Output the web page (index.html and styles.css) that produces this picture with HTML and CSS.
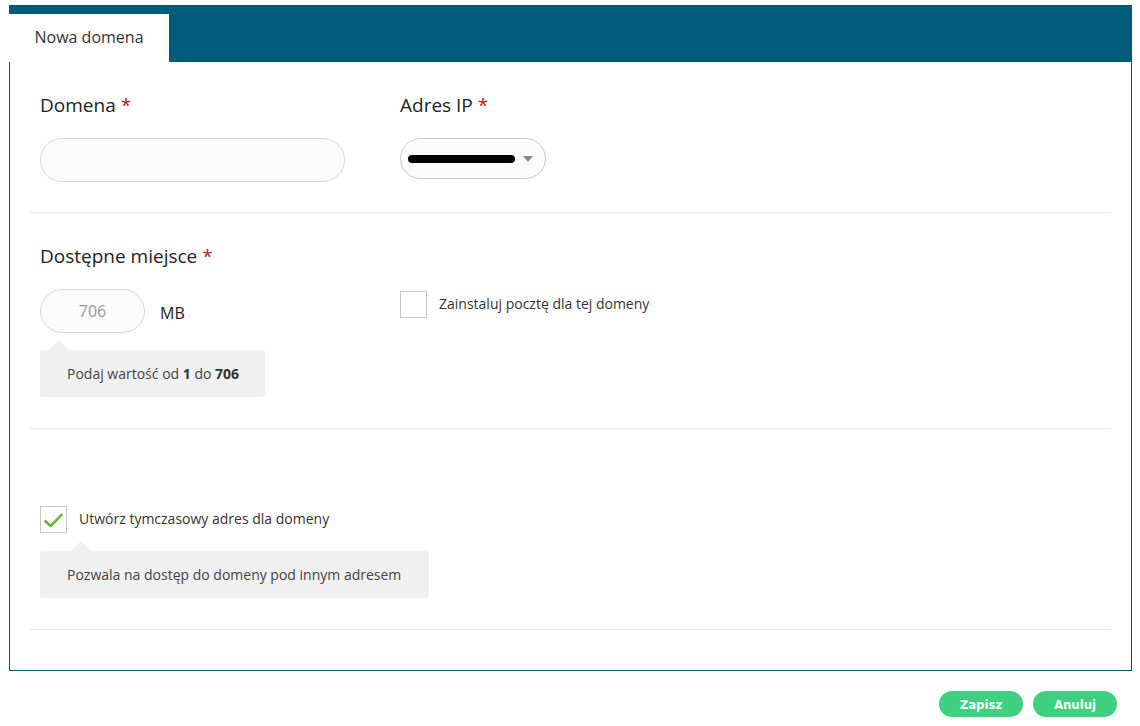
FILE: index.html
```html
<!DOCTYPE html>
<html>
<head>
  <title>Nowa domena</title>
  <meta charset="utf-8">
  <link rel="stylesheet" href="styles.css">
</head>
<body>
  <div class="topbar">
    <div class="tab">Nowa domena</div>
  </div>

  <div class="panel">
    <div class="row row-first">
      <div class="field">
        <label class="label">Domena <span class="req">*</span></label>
        <input type="text" class="text-input wide">
      </div>
      <div class="field">
        <label class="label">Adres IP <span class="req">*</span></label>
        <div class="select">
          <span class="redacted"></span>
          <span class="caret"></span>
        </div>
      </div>
    </div>

    <div class="row row-second">
      <div class="field">
        <label class="label">Dostępne miejsce <span class="req">*</span></label>
        <div class="size-line">
          <input type="text" class="text-input small" value="706">
          <span class="unit">MB</span>
        </div>
        <div class="hint hint-size">Podaj wartość od <strong>1</strong> do <strong>706</strong></div>
      </div>
      <div class="field">
        <div class="check-line mail-check">
          <span class="checkbox"></span>
          <span class="check-text">Zainstaluj pocztę dla tej domeny</span>
        </div>
      </div>
    </div>

    <div class="row row-third">
      <div class="field">
        <div class="check-line">
          <span class="checkbox">
            <svg width="19" height="15" viewBox="0 0 19 15"><path d="M1.5 8.2 L6.6 13 L17.5 1.8" fill="none" stroke="#6db33f" stroke-width="2.6" stroke-linecap="round" stroke-linejoin="round"/></svg>
          </span>
          <span class="check-text">Utwórz tymczasowy adres dla domeny</span>
        </div>
        <div class="hint hint-temp">Pozwala na dostęp do domeny pod innym adresem</div>
      </div>
    </div>
  </div>

  <div class="actions">
    <button class="btn">Zapisz</button>
    <button class="btn">Anuluj</button>
  </div>
</body>
</html>
```

FILE: styles.css
```css
body {
  margin: 0;
  padding: 5px 8px 0 9px;
  font-family: 'Open Sans', 'Noto Sans', sans-serif;
  color: #222;
  background: #fff;
}

.topbar {
  background-color: #005a7a;
  height: 57px;
  padding-top: 9px;
  box-sizing: border-box;
}

.tab {
  width: 160px;
  height: 48px;
  background: #fff;
  color: #333;
  font-size: 16px;
  line-height: 47px;
  text-align: center;
}

.panel {
  border: 1px solid #005a7a;
  border-top: none;
  padding: 0 20px 40px;
}

.row {
  display: grid;
  grid-template-columns: 360px 1fr;
  padding: 0 10px;
  border-bottom: 1px solid #e6e6e6;
}

.row-first {
  padding-top: 31px;
  padding-bottom: 30px;
}

.row-second {
  padding-top: 31px;
  padding-bottom: 31px;
}

.row-third {
  padding-top: 77px;
  padding-bottom: 31px;
}

.label {
  display: block;
  font-size: 19px;
  line-height: 24px;
  margin-bottom: 21px;
  color: #222;
}

.req {
  color: #c4161c;
}

.text-input {
  display: block;
  height: 44px;
  border: 1px solid #ddd9c9;
  border-radius: 22px;
  background: #fafbfa;
  box-sizing: border-box;
  font-family: 'Open Sans', sans-serif;
  font-size: 16px;
  outline: none;
}

.text-input.wide {
  width: 305px;
}

.text-input.small {
  width: 105px;
  text-align: center;
  color: #999;
}

.select {
  display: flex;
  align-items: center;
  width: 146px;
  height: 41px;
  border: 1px solid #c8c8c8;
  border-radius: 21px;
  background: #fcfcfc;
  box-sizing: border-box;
  padding-left: 7px;
}

.redacted {
  width: 107px;
  height: 8px;
  border-radius: 4px;
  background: #000;
}

.caret {
  margin-left: 8px;
  width: 0;
  height: 0;
  border-left: 5px solid transparent;
  border-right: 5px solid transparent;
  border-top: 6px solid #888;
}

.size-line {
  display: flex;
  align-items: center;
  gap: 15px;
}

.unit {
  font-size: 16px;
  color: #222;
  padding-top: 4px;
}

.hint {
  position: relative;
  background: #f0f0f0;
  border-radius: 2px;
  font-size: 14px;
  color: #444;
  height: 47px;
  line-height: 47px;
  padding-left: 27px;
  box-sizing: border-box;
}

.hint::before {
  content: "";
  position: absolute;
  top: -10px;
  width: 0;
  height: 0;
  border-left: 10px solid transparent;
  border-right: 10px solid transparent;
  border-bottom: 10px solid #f0f0f0;
}

.hint strong {
  font-weight: 700;
  color: #333;
}

.hint-size {
  width: 225px;
  margin-top: 17px;
}

.hint-size::before {
  left: 9px;
}

.hint-temp {
  width: 389px;
  margin-top: 18px;
}

.hint-temp::before {
  left: 31px;
}

.mail-check {
  margin-top: 47px;
}

.check-line {
  display: flex;
  align-items: center;
  gap: 12px;
  font-size: 14px;
  color: #333;
}

.check-text {
  margin-top: -3px;
}

.checkbox {
  width: 27px;
  height: 27px;
  border: 1px solid #c8c8c8;
  background: #fff;
  box-sizing: border-box;
  display: flex;
  align-items: center;
  justify-content: center;
  flex-shrink: 0;
}

.checkbox svg {
  margin-top: 2px;
}

.actions {
  display: flex;
  justify-content: flex-end;
  gap: 10px;
  padding: 20px 15px 0 0;
}

.btn {
  width: 84px;
  height: 26px;
  border: none;
  border-radius: 13px;
  background-color: #3ed07f;
  color: #fff;
  font-family: 'DejaVu Sans Condensed', 'DejaVu Sans', sans-serif;
  font-weight: bold;
  font-size: 13px;
  cursor: pointer;
  padding: 0;
}
```
